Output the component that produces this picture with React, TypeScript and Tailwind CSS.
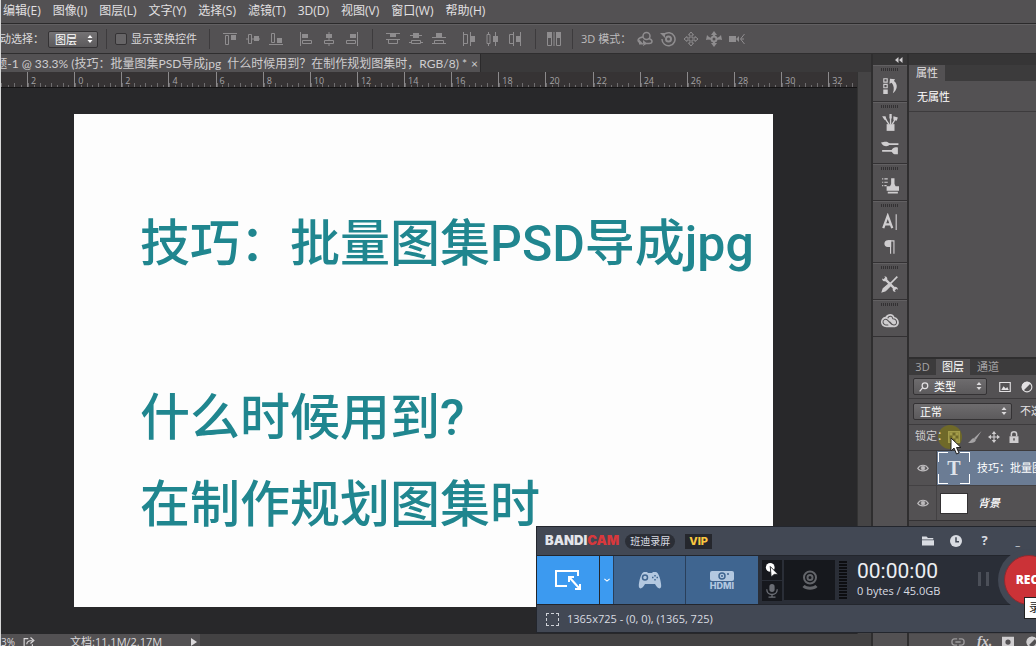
import type { ReactNode } from "react";
import clsx from "clsx";

const menus = ["编辑(E)", "图像(I)", "图层(L)", "文字(Y)", "选择(S)", "滤镜(T)", "3D(D)", "视图(V)", "窗口(W)", "帮助(H)"];

const rulerMarks = [2, 0, 2, 4, 6, 8, 10, 12, 14, 16, 18, 20, 22, 24, 26, 28, 30];

function Icon({ children, className = "size-4" }: { children: ReactNode; className?: string }) {
  return (
    <svg viewBox="0 0 16 16" className={clsx("shrink-0", className)} fill="none" stroke="currentColor" aria-hidden="true">
      {children}
    </svg>
  );
}

function ToolButton({ label, children }: { label: string; children: ReactNode }) {
  return (
    <button type="button" aria-label={label} className="text-[#8f8d8f]">
      <Icon>{children}</Icon>
    </button>
  );
}

function Divider() {
  return <div className="h-5 w-px shrink-0 bg-[#3d3b3d]" />;
}

function Ticks({ count }: { count: number }) {
  return (
    <div className="flex h-1 items-end">
      {Array.from({ length: count }, (_, i) => (
        <span key={i} className={clsx("flex-1 border-l border-[#6f6d6f]", i % 2 ? "h-0.5" : "h-1")} />
      ))}
    </div>
  );
}

function MenuBar() {
  return (
    <nav className="flex h-6 shrink-0 items-center gap-3 overflow-hidden border-b border-[#2b2a2b] pb-0.5 pl-0.5 text-xs text-[#e2e0e2]">
      {menus.map((m) => (
        <button key={m} type="button" className="shrink-0">
          {m}
        </button>
      ))}
    </nav>
  );
}

function OptionsBar() {
  return (
    <div className="flex h-[29px] shrink-0 items-center overflow-hidden border-t border-[#626062] text-[11px] whitespace-nowrap text-[#dcdadc]">
      <label htmlFor="auto" className="flex w-[47px] shrink-0 justify-end overflow-hidden pr-1">
        自动选择：
      </label>
      <div className="relative shrink-0">
        <select
          id="auto"
          className="block h-[17px] w-[50px] appearance-none rounded-xs border border-[#343234] bg-linear-to-b from-[#757375] to-[#5c5a5c] pl-1.5 leading-none text-white"
        >
          <option>图层</option>
        </select>
        <Icon className="pointer-events-none absolute top-1 right-1 size-2 text-white">
          <path d="M3 6 8 0l5 6zM3 10l5 6 5-6z" fill="currentColor" stroke="none" />
        </Icon>
      </div>
      <div className="ml-2">
        <Divider />
      </div>
      <label className="mr-3 ml-2 flex shrink-0 items-center gap-1">
        <input type="checkbox" className="size-3 appearance-none rounded-xs border border-[#343234] bg-[#676567]" />
        显示变换控件
      </label>
      <Divider />
      <div className="ml-3 flex shrink-0 gap-[7px]">
        <ToolButton label="顶对齐">
          <path d="M1 2.500h14M3.500 4.500h3v9h-3z" />
          <path d="M9 4h5v5H9z" fill="currentColor" stroke="none" />
        </ToolButton>
        <ToolButton label="垂直居中对齐">
          <path d="M3.500 3.500h3v9h-3zM1 8h2M7 8h8" />
          <path d="M9 5h5v5H9z" fill="currentColor" stroke="none" />
        </ToolButton>
        <ToolButton label="底对齐">
          <path d="M1 13.500h14M3.500 2.500h3v9h-3z" />
          <path d="M9 7h5v5H9z" fill="currentColor" stroke="none" />
        </ToolButton>
      </div>
      <div className="mr-3 ml-3.5 flex shrink-0 gap-[7px]">
        <ToolButton label="左对齐">
          <path d="M2.500 1v14M4.500 9.500h9v3h-9z" />
          <path d="M4 3h6v4H4z" fill="currentColor" stroke="none" />
        </ToolButton>
        <ToolButton label="水平居中对齐">
          <path d="M8 1v8m0 4v2M3.500 9.500h9v3h-9z" />
          <path d="M5 3h6v4H5z" fill="currentColor" stroke="none" />
        </ToolButton>
        <ToolButton label="右对齐">
          <path d="M13.500 1v14M2.500 9.500h9v3h-9z" />
          <path d="M6 3h6v4H6z" fill="currentColor" stroke="none" />
        </ToolButton>
      </div>
      <Divider />
      <div className="ml-3 flex shrink-0 gap-[7px]">
        <ToolButton label="按顶分布">
          <path d="M1 2.500h14M1 8.500h14M3.500 9v3.500h9V9" />
          <path d="M5 3h6v3H5z" fill="currentColor" stroke="none" />
        </ToolButton>
        <ToolButton label="按中分布">
          <path d="M2 4.500h12M1 11.500h2m10 0h2M3.500 9.500h9v3h-9z" />
          <path d="M5 2h6v5H5z" fill="currentColor" stroke="none" />
        </ToolButton>
        <ToolButton label="按底分布">
          <path d="M1 6.500h14M1 12.500h14M3.500 12V9.500h9V12" />
          <path d="M5 2h6v4H5z" fill="currentColor" stroke="none" />
        </ToolButton>
      </div>
      <div className="mr-3 ml-3.5 flex shrink-0 gap-[7px]">
        <ToolButton label="按左分布">
          <path d="M2.500 1v14M9.500 1v14M3 3.500h3.500v9H3" />
          <path d="M10 5h4v6h-4z" fill="currentColor" stroke="none" />
        </ToolButton>
        <ToolButton label="按水平居中分布">
          <path d="M4.500 1v2m0 10v2M11.500 1v14M3 3.500h3v9H3z" />
          <path d="M9 5h5v6H9z" fill="currentColor" stroke="none" />
        </ToolButton>
        <ToolButton label="按右分布">
          <path d="M6.500 1v14M13.500 1v14M6 3.500H2.500v9H6" />
          <path d="M9 5h4v6H9z" fill="currentColor" stroke="none" />
        </ToolButton>
      </div>
      <Divider />
      <div className="mx-2.5 flex shrink-0">
        <ToolButton label="自动对齐图层">
          <path d="M8 1v14M1.500 1.500h4v13h-4zM10.500 1.500h4v13h-4z" />
          <path d="M1 1h5v6H1zM10 1h5v6h-5z" fill="currentColor" stroke="none" />
        </ToolButton>
      </div>
      <Divider />
      <span className="ml-2 w-14 shrink-0 text-[#bdbbbd]">3D 模式：</span>
      <div className="flex shrink-0 gap-[7px]">
        <ToolButton label="旋转 3D 对象">
          <circle cx="9.500" cy="5" r="3.500" strokeWidth="1.500" />
          <path d="M6 6C1 6.500-.5 10 3 11.500M12 7.500c4 1.500 4 4.500 0 5H7" strokeWidth="1.500" />
          <path d="M2 8.500v5h5zM6 9l4 3.500L6 15z" fill="currentColor" stroke="none" />
        </ToolButton>
        <ToolButton label="滚动 3D 对象">
          <circle cx="8.500" cy="8" r="2.500" strokeWidth="2" />
          <path d="M4 3.500A6.500 6.500 0 1 1 2 8" strokeWidth="1.500" />
          <path d="M0 2h5v5z" fill="currentColor" stroke="none" />
        </ToolButton>
        <ToolButton label="拖动 3D 对象">
          <path d="m8 1 2.500 3H9v3h3V5.500L15 8l-3 2.500V9H9v3h1.500L8 15l-2.500-3H7V9H4v1.500L1 8l3-2.500V7h3V4H5.500z" />
        </ToolButton>
        <ToolButton label="滑动 3D 对象">
          <path d="M8 2v3M2 7l3 1m9-1-3 1m-3 3v3" strokeWidth="2" />
          <path d="m8 0 3 4H5zM0 9l1-5 4 4zM16 9l-1-5-4 4zM8 16l-3-4h6z" fill="currentColor" stroke="none" />
          <circle cx="8" cy="8" r="2.500" strokeWidth="2" />
        </ToolButton>
        <ToolButton label="缩放 3D 对象">
          <path d="M0 5h7v6H0zM7 8l3-3v6z" fill="currentColor" stroke="none" />
          <path d="m15.500 3-4 5 4 5M12 8h3" />
        </ToolButton>
      </div>
    </div>
  );
}

function DocumentArea() {
  return (
    <main className="flex min-w-0 flex-1 flex-col">
      <div className="flex h-[18px] shrink-0 bg-[#3a393a]">
        <div className="flex w-[480px] items-center justify-end gap-1 overflow-hidden border-r border-[#2b2a2b] bg-[#535153] pt-0.5 pr-0.5 text-xs leading-4 whitespace-pre text-[#cfcdcf] [font-family:Lato,'Noto_Sans_CJK_SC',sans-serif]">
          <span>标题-1 @ 33.3% (技巧：批量图集PSD导成jpg  什么时候用到？在制作规划图集时，RGB/8) *</span>
          <button type="button" aria-label="关闭">
            ×
          </button>
        </div>
      </div>
      <div className="flex min-h-0 flex-1">
        <div className="flex min-w-0 flex-1 flex-col bg-[#28282a]">
          <div className="flex h-4 shrink-0 border-b border-[#151415] bg-[#363334] text-[9px] leading-[13px] text-[#a5a3a5]">
            <div className="flex w-[26px] flex-col justify-end">
              <Ticks count={4} />
            </div>
            {rulerMarks.map((mark, i) => (
              <div key={i} className="flex flex-1 flex-col justify-end border-l border-[#8b898b]">
                <span className="-mb-1 pl-[3px]">{mark}</span>
                <Ticks count={8} />
              </div>
            ))}
            <div className="flex w-[29px] flex-col justify-end border-l border-[#8b898b]">
              <span className="-mb-1 pl-[3px]">32</span>
              <Ticks count={5} />
            </div>
          </div>
          <div className="mt-[26px] mr-[84px] mb-[27px] ml-[73px] flex-1 bg-[#fdfdfd] pt-[87px] pl-[66px] text-[50px] leading-[87px] font-medium whitespace-nowrap text-[#20868f] [font-family:Roboto,'Noto_Sans_CJK_SC',sans-serif]">
            <p>技巧：批量图集PSD导成jpg</p>
            <p>&nbsp;</p>
            <p>什么时候用到?</p>
            <p>在制作规划图集时</p>
          </div>
        </div>
        <div className="w-3.5 border-l border-[#333] bg-[#454445]" />
      </div>
      <footer className="flex h-3 shrink-0 items-center overflow-hidden bg-[#434243] text-[11px] text-[#dcdadc]">
        <div className="flex h-full w-[199px] items-center bg-[#535153] pt-1">
          <span className="flex w-3.5 justify-end overflow-hidden text-[10px]">33.33%</span>
          <Icon className="ml-2 size-3">
            <path d="M7 3.500H1.500v11h11V11M5 11c0-4 3-5 8-5M10 2l4.500 4-4.500 4" strokeWidth="1.500" />
          </Icon>
          <span className="ml-[35px]">文档:11.1M/2.17M</span>
          <Icon className="mr-0.5 ml-auto size-2">
            <path d="M2 0v16l12-8z" fill="currentColor" stroke="none" />
          </Icon>
        </div>
      </footer>
    </main>
  );
}

function DockGroup({ children }: { children: ReactNode }) {
  return (
    <div className="flex flex-col items-center border-t border-b border-t-[#626062] border-b-[#333133] pt-0.5 pb-[3px]">
      <div className="h-[3px] w-[18px] bg-[repeating-linear-gradient(90deg,#333133_0_1px,#535153_1px_2px)]" />
      <div className="pt-0.5 text-[#cfcdcf]">{children}</div>
    </div>
  );
}

function DockButton({ label, children }: { label: string; children: ReactNode }) {
  return (
    <button type="button" aria-label={label} className="flex h-[25px] w-8 items-center justify-center">
      <Icon className="size-[18px]">{children}</Icon>
    </button>
  );
}

function Dock() {
  return (
    <aside className="flex w-[38px] shrink-0 flex-col border-x-2 border-[#2f2e2f]">
      <div className="flex h-[11px] items-center justify-end bg-[#363536] pr-1 text-[#cfcdcf]">
        <Icon className="size-2">
          <path d="M7 2v12L0 8zM15 2v12L8 8z" fill="currentColor" stroke="none" />
        </Icon>
      </div>
      <DockGroup>
        <DockButton label="历史记录">
          <path d="M2.500 1.500h3v3h-3zM2.500 6.500h3v3h-3z" />
          <path d="M2 11h4v4H2zM7.500 6 8 1.500 12.500 2 11.500 3.500c4 3 3 8-1 11 1.500-4 1-7-1-9.500z" fill="currentColor" stroke="none" />
        </DockButton>
      </DockGroup>
      <DockGroup>
        <DockButton label="画笔预设">
          <path d="M5 9h7v6H5z" fill="currentColor" stroke="none" />
          <path d="M7 9 3 3M8.500 9V2M10 9l3-5" strokeWidth="1.200" />
          <path d="m1 2 3 0 1 3-2 0zM7.500 0h2v4h-2zM11 2l4 1-1 3-3-1z" fill="currentColor" stroke="none" />
        </DockButton>
        <DockButton label="画笔">
          <path d="M5 4.500h10.500M1 10.500h10" strokeWidth="1.500" />
          <path d="M0 3c3 0 5-2 8 1.500C6 7.500 2 7 0 3zM9 10.500c2-4 4-3 6-3v6c-2 0-4 1-6-3z" fill="currentColor" stroke="none" />
        </DockButton>
      </DockGroup>
      <DockGroup>
        <DockButton label="仿制源">
          <path d="M1 2.500h1m1 0h3M1 5.500h1m1 0h3M1 8.500h1m1 0h2" />
          <path d="M9 2h3v5l1 2h3v4H5V9h3l1-2zM6 14h9v1.500H6z" fill="currentColor" stroke="none" />
        </DockButton>
      </DockGroup>
      <DockGroup>
        <DockButton label="字符">
          <path d="m2 13.500 4-11 4 11M3.500 10H9" strokeWidth="2" />
          <path d="M13.500 1v14" />
        </DockButton>
        <DockButton label="段落">
          <path d="M9 2H6C2 2 2 8 6 8h3z" fill="currentColor" stroke="none" />
          <path d="M8.500 2v12M11.500 2v12M6 2.500h6" />
        </DockButton>
      </DockGroup>
      <DockGroup>
        <DockButton label="工具预设">
          <path d="m3 3 10 10" strokeWidth="2" />
          <path d="M14.500 1.500 8 8" strokeWidth="1.500" />
          <path d="M8 7 2 12l-1 3 3-1 5-5z" fill="currentColor" />
          <path d="M1 3c0 3 3 3 4 2s1-4-2-4l1 2-1 1zM15 13c0-3-3-3-4-2s-1 4 2 4l-1-2 1-1z" fill="currentColor" stroke="none" />
        </DockButton>
      </DockGroup>
      <DockGroup>
        <DockButton label="Creative Cloud">
          <path d="M4 4.200C6 .8 11 1 12 4.500c5.500 1.500 5 9-.5 9H5C-1.500 13.500-1.500 5 4 4.200z" fill="currentColor" stroke="none" />
          <path d="M9.500 11 6 7.500C4 5.500 1.500 7 1.800 9.200 2 11 4 12 6.500 11.500M6 5.500C7 3 10 3.500 10.500 6c4 0 4.500 5.500 1 5.500-1.500 0-2-.5-4-3" stroke="#535153" strokeWidth=".9" />
        </DockButton>
      </DockGroup>
    </aside>
  );
}

function PanelSelect({ label, value, className }: { label: string; value: string; className?: string }) {
  return (
    <div className={clsx("relative shrink-0", className)}>
      <select
        aria-label={label}
        className="block h-[17px] w-full appearance-none rounded-xs border border-[#343234] bg-linear-to-b from-[#6e6c6e] to-[#5c5a5c] leading-none text-white"
      >
        <option>{value}</option>
      </select>
      <Icon className="pointer-events-none absolute top-1 right-1 size-2 text-[#dcdadc]">
        <path d="M3 6 8 0l5 6zM3 10l5 6 5-6z" fill="currentColor" stroke="none" />
      </Icon>
    </div>
  );
}

function Eye() {
  return (
    <button type="button" aria-label="可见性" className="flex w-7 shrink-0 items-center justify-center border-r border-[#434143] text-[#bdbbbd]">
      <Icon className="size-3">
        <path d="M1 8.500C4 3 12 3 15 8.500 12 13 4 13 1 8.500z" strokeWidth="1.500" />
        <circle cx="8" cy="8" r="2.500" fill="currentColor" />
      </Icon>
    </button>
  );
}

function Panels() {
  return (
    <aside className="flex w-[127px] shrink-0 flex-col overflow-hidden text-[11px] whitespace-nowrap text-[#e2e0e2]">
      <div className="h-[11px] shrink-0 bg-[#363536]" />
      {/* 属性 */}
      <div className="flex h-4 shrink-0 bg-[#3c3b3c]">
        <button type="button" className="flex items-center bg-[#535153] px-[7px]">
          属性
        </button>
      </div>
      <div className="flex h-[31px] shrink-0 items-center border-b border-[#3d3b3d] pt-0.5 pl-2 text-white">无属性</div>
      <div className="h-[247px] shrink-0 border-b-2 border-[#2f2e2f]" />
      {/* 图层 */}
      <div className="flex h-4 shrink-0 bg-[#3c3b3c] text-[#a5a3a5]">
        <button type="button" className="w-[27px]">
          3D
        </button>
        <button type="button" className="w-[34px] bg-[#535153] text-white">
          图层
        </button>
        <button type="button" className="w-9">
          通道
        </button>
      </div>
      <div className="flex h-6 shrink-0 items-center border-b border-[#3d3b3d] pl-1">
        <div className="relative">
          <PanelSelect label="筛选" value="类型" className="w-[74px] [&>select]:pl-5" />
          <Icon className="pointer-events-none absolute top-1 left-1.5 size-2.5">
            <circle cx="9.500" cy="6" r="4.500" strokeWidth="2" />
            <path d="m6 9-5 6" strokeWidth="2" />
          </Icon>
        </div>
        <button type="button" aria-label="像素图层滤镜" className="ml-3">
          <Icon className="size-3">
            <path d="M1 2h14v12H1z" strokeWidth="1.500" />
            <path d="m3 12 3-5 3 3 2-2 2 4z" fill="currentColor" stroke="none" />
          </Icon>
        </button>
        <button type="button" aria-label="调整图层滤镜" className="ml-2.5">
          <Icon className="size-3">
            <circle cx="8" cy="8" r="6.500" strokeWidth="1.500" />
            <path d="M13 3A7 7 0 0 0 3 13z" fill="currentColor" stroke="none" />
          </Icon>
        </button>
      </div>
      <div className="flex h-[26px] shrink-0 items-center border-b border-[#3d3b3d] pl-1">
        <PanelSelect label="混合模式" value="正常" className="w-[99px] [&>select]:pl-1.5" />
        <span className="ml-2">不透明度</span>
      </div>
      <div className="relative flex h-[26px] shrink-0 items-center border-b border-[#3d3b3d] pb-0.5 pl-1.5 text-[#cfcdcf]">
        <span className="absolute left-[29px] size-6 rounded-full bg-[#6f6929]" />
        <span className="relative w-[31px] shrink-0">锁定：</span>
        <button type="button" aria-label="锁定透明像素" className="relative ml-0.5">
          <Icon className="size-3 text-[#a39c4a]">
            <path d="M1 1h14v14H1z" strokeWidth="2" />
            <path d="M2 2h4v4H2zM10 2h4v4h-4zM6 6h4v4H6zM2 10h4v4H2zM10 10h4v4h-4z" fill="currentColor" stroke="none" />
          </Icon>
        </button>
        <button type="button" aria-label="锁定图像像素" className="ml-2">
          <Icon className="size-3.5 text-[#a5a3a5]">
            <path d="M15.500 1 7 9l2 2zM7 9.500c-3-.5-3 3-7 5 4 1 8 .5 9-3z" fill="currentColor" stroke="none" />
          </Icon>
        </button>
        <button type="button" aria-label="锁定位置" className="ml-1.5">
          <Icon className="size-3">
            <path d="M8 2v12M2 8h12" strokeWidth="1.500" />
            <path d="m8 0 3 4H5zM0 8l4-3v6zM16 8l-4-3v6zM8 16l-3-4h6z" fill="currentColor" stroke="none" />
          </Icon>
        </button>
        <button type="button" aria-label="锁定全部" className="ml-2">
          <Icon className="size-3">
            <path d="M2 7h12v9H2z" fill="currentColor" stroke="none" />
            <path d="M4.500 7V4c0-4 7-4 7 0v3" strokeWidth="2" />
            <path d="M8 9.500v3" stroke="#535153" strokeWidth="2" />
          </Icon>
        </button>
        <svg viewBox="0 0 12 18" className="absolute top-3 left-[41px] h-[18px] w-3" aria-hidden="true">
          <path d="M1 1v13l3-3 2.500 6L9 16l-2.500-5.500H11z" fill="#fff" stroke="#222" />
        </svg>
      </div>
      <div className="flex h-[35px] shrink-0 border-b border-[#434143]">
        <Eye />
        <div className="flex flex-1 items-center bg-[#6b7c94] pl-px">
          <div className="relative flex size-8 shrink-0 items-center justify-center text-xl font-bold text-[#dfe3ea] [font-family:'Liberation_Serif',serif]">
            T
            <span className="absolute top-0 left-0 size-2.5 border-t border-l border-white" />
            <span className="absolute top-0 right-0 size-2.5 border-t border-r border-white" />
            <span className="absolute bottom-0 left-0 size-2.5 border-b border-l border-white" />
            <span className="absolute right-0 bottom-0 size-2.5 border-r border-b border-white" />
          </div>
          <span className="ml-[7px] text-white">技巧：批量图集</span>
        </div>
      </div>
      <div className="flex h-[35px] shrink-0 border-b border-[#343234]">
        <Eye />
        <div className="flex flex-1 items-center pl-[3px]">
          <span className="h-[21px] w-7 border border-[#343234] bg-white" />
          <span className="ml-2.5 font-medium text-white italic">背景</span>
        </div>
      </div>
      <div className="flex-1 bg-[#4b494b]" />
      <div className="flex h-3 shrink-0 items-center overflow-hidden pt-1 pl-[42px] text-[#cfcdcf]">
        <Icon className="size-3.5 text-[#9b999b]">
          <path d="M7 4.500H4c-4 0-4 7 0 7h3M9 4.500h3c4 0 4 7 0 7H9M5 8h6" strokeWidth="1.500" />
        </Icon>
        <span className="ml-3 text-sm leading-3 font-semibold italic [font-family:'Liberation_Serif',serif]">fx.</span>
        <Icon className="ml-2.5 size-3">
          <path d="M0 1h16v14H0z" fill="currentColor" stroke="none" />
          <circle cx="8" cy="8" r="3.500" fill="#535153" stroke="none" />
        </Icon>
        <Icon className="ml-3 size-3">
          <circle cx="8" cy="8" r="6.500" strokeWidth="2" />
          <path d="M13 3A7 7 0 0 0 3 13z" fill="currentColor" stroke="none" />
        </Icon>
      </div>
    </aside>
  );
}

function Recorder() {
  return (
    <section className="absolute right-0 bottom-[13px] w-[500px] overflow-hidden border-t border-l border-[#23262d] bg-[#424854] text-[#d9dce2]">
      <header className="flex h-7 items-center pl-2">
        <h2 className="text-[13px] font-black text-[#e3e5ea] [font-family:Inter,sans-serif]">
          BANDI<span className="text-[#d8383c]">CAM</span>
        </h2>
        <span className="ml-1.5 flex h-[15px] items-center rounded-full bg-[#2b2e36] px-[5px] text-[10px]">班迪录屏</span>
        <span className="ml-2.5 flex h-[15px] items-center bg-[#25272d] px-1 text-[11px] font-extrabold text-[#fbc740] [font-family:Inter,sans-serif]">
          VIP
        </span>
        <div className="ml-auto flex items-center pr-4">
          <button type="button" aria-label="文件夹">
            <Icon className="size-3">
              <path d="M0 2h6l2 2h7v2H0zM0 7h16v7H0z" fill="currentColor" stroke="none" />
            </Icon>
          </button>
          <button type="button" aria-label="计划" className="ml-4">
            <Icon className="size-3">
              <circle cx="8" cy="8" r="8" fill="currentColor" stroke="none" />
              <path d="M8 3v6h4" stroke="#424854" strokeWidth="2" />
            </Icon>
          </button>
          <button type="button" aria-label="帮助" className="ml-[19px] text-[13px] font-bold">
            ?
          </button>
          <button type="button" aria-label="最小化" className="ml-7 h-5 text-[10px] leading-3">
            _
          </button>
        </div>
      </header>
      <div className="relative flex h-[50px] border-y border-[#23262d] bg-[#2a2e37]">
        <button type="button" aria-label="矩形区域" className="flex w-[63px] items-center justify-center border-r border-[#23262d] bg-[#3c9af0] text-white">
          <svg viewBox="0 0 28 22" className="h-[22px] w-7" fill="none" stroke="currentColor" strokeWidth="2" aria-hidden="true">
            <path d="M13 17H2V2h22v5M16 9l9 10" />
            <path d="M15 13V8h5M21 20h5v-5" />
          </svg>
        </button>
        <button type="button" aria-label="更多模式" className="flex w-[13px] items-center justify-center bg-[#3c9af0] text-white">
          <Icon className="size-1.5">
            <path d="m1 5 7 6 7-6" strokeWidth="3" />
          </Icon>
        </button>
        <button type="button" aria-label="游戏" className="flex w-[73px] items-center justify-center border-x border-[#2a3f5a] bg-[#3f6590] text-[#b3c8e0]">
          <svg viewBox="0 0 24 18" className="h-[18px] w-6" aria-hidden="true">
            <path d="M6 1h3l1 1h4l1-1h3c3 0 6 13 5 15-1 3-4 1-6-3H7c-2 4-5 6-6 3C0 14 3 1 6 1z" fill="currentColor" />
            <circle cx="7" cy="6.500" r="2.500" fill="none" stroke="#3f6590" strokeWidth="1.500" />
            <path d="M17 4v1.500M17 8v1.500M14 6.500h1.500M18.500 6.500H20" stroke="#3f6590" strokeWidth="1.500" />
          </svg>
        </button>
        <button type="button" className="flex w-[72px] flex-col items-center justify-center bg-[#3f6590] text-[9px] leading-[9px] font-extrabold text-[#b3c8e0] [font-family:Inter,sans-serif]">
          <svg viewBox="0 0 24 10" className="h-2.5 w-6" aria-hidden="true">
            <rect width="24" height="10" rx="2" fill="currentColor" />
            <circle cx="12" cy="5" r="3" fill="none" stroke="#3f6590" strokeWidth="1.500" />
            <circle cx="12" cy="5" r="1" fill="#3f6590" />
            <path d="M17 3h2" stroke="#3f6590" strokeWidth="1.500" />
          </svg>
          HDMI
        </button>
        <div className="ml-1 flex w-5 flex-col justify-center gap-px">
          <button type="button" aria-label="鼠标效果" className="flex h-5 items-center justify-center bg-[#16181d] text-white">
            <Icon className="size-3.5">
              <circle cx="6" cy="5" r="5" fill="currentColor" stroke="none" />
              <path d="m6 4 9 9h-4.500L7 16z" fill="currentColor" stroke="#16181d" />
            </Icon>
          </button>
          <button type="button" aria-label="麦克风" className="flex h-5 items-center justify-center bg-[#16181d] text-[#6b6e75]">
            <Icon className="size-3.5">
              <rect x="5" y="0" width="6" height="9" rx="3" fill="currentColor" stroke="none" />
              <path d="M2 6c0 8 12 8 12 0M8 12v3M4 15h8" strokeWidth="1.500" />
            </Icon>
          </button>
        </div>
        <button type="button" aria-label="摄像头" className="my-1 ml-0.5 flex w-[51px] items-center justify-center bg-[#16181d] text-[#63656a]">
          <svg viewBox="0 0 18 20" className="h-5 w-[18px]" fill="none" stroke="currentColor" strokeWidth="2" aria-hidden="true">
            <circle cx="9" cy="7.500" r="6" />
            <circle cx="9" cy="7.500" r="2.500" />
            <path d="M2.500 16c3 3 10 3 13 0" strokeWidth="3" />
          </svg>
        </button>
        <div className="my-1 ml-1 w-2 bg-[#0d0e11] bg-[repeating-linear-gradient(0deg,#2a2e37_0_1px,transparent_1px_3px)]" />
        <div className="ml-2.5 flex flex-col justify-center">
          <span className="text-[21px] leading-[21px] text-[#eceef2] [font-family:Roboto,sans-serif]">00:00:00</span>
          <span className="text-[11px] leading-[17px]">0 bytes / 45.0GB</span>
        </div>
        <div className="absolute -top-[7px] -right-6 size-[62px] rounded-full bg-[#424854]" />
        <button type="button" aria-label="暂停" className="absolute top-4 right-[47px] flex h-4 gap-[5px]">
          <span className="h-3.5 w-[3px] bg-[#4b4f58]" />
          <span className="h-3.5 w-[3px] bg-[#4b4f58]" />
        </button>
        <button
          type="button"
          className="absolute -top-px -right-[18px] size-[50px] rounded-full border border-[#8d2a30] bg-[#cb3237] pr-1 text-xs font-extrabold text-white"
        >
          REC
        </button>
      </div>
      <footer className="flex h-7 items-center gap-2 border-b border-[#23262d] pt-0.5 pl-[9px] text-[11px]">
        <span className="size-[13px] border border-dashed border-[#cfd2d8]" />
        1365x725 - (0, 0), (1365, 725)
      </footer>
      <div role="tooltip" className="absolute right-0 bottom-3.5 w-3 overflow-hidden border border-r-0 border-[#222] bg-white py-0.5 pl-1 text-xs whitespace-nowrap text-[#222]">
        录制
      </div>
    </section>
  );
}

export default function App() {
  return (
    <div className="relative flex h-screen flex-col overflow-hidden border-l border-[#d8d8d8] bg-[#535153] [font-family:'Open_Sans','Noto_Sans_CJK_SC',sans-serif]">
      <MenuBar />
      <OptionsBar />
      <div className="flex min-h-0 flex-1 border-t border-[#2f2e2f]">
        <DocumentArea />
        <Dock />
        <Panels />
      </div>
      <Recorder />
    </div>
  );
}
